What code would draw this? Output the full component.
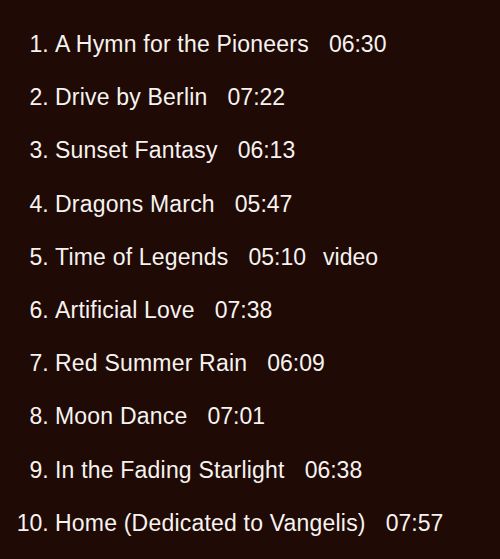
import React from 'react'

const tracks = [
	{ title: 'A Hymn for the Pioneers', time: '06:30' },
	{ title: 'Drive by Berlin', time: '07:22' },
	{ title: 'Sunset Fantasy', time: '06:13' },
	{ title: 'Dragons March', time: '05:47' },
	{ title: 'Time of Legends', time: '05:10', video: true },
	{ title: 'Artificial Love', time: '07:38' },
	{ title: 'Red Summer Rain', time: '06:09' },
	{ title: 'Moon Dance', time: '07:01' },
	{ title: 'In the Fading Starlight', time: '06:38' },
	{ title: 'Home (Dedicated to Vangelis)', time: '07:57' },
]

export default function App() {
	return (
		<div className="w-[500px] h-[559px] bg-[#200a05] overflow-hidden" style={{ fontFamily: '"Liberation Sans", Arial, sans-serif' }}>
			<ol className="list-decimal pl-[55px] pt-[18px] text-[23px] leading-[53.2px] text-[#f6f3f0]">
				{tracks.map((track, index) => (
					<li key={index}>
						<span className="tracking-[0.2px]">{track.title}</span>
						<span className="ml-[20px]">{track.time}</span>
						{track.video && <span className="ml-[17px]">video</span>}
					</li>
				))}
			</ol>
		</div>
	)
}
